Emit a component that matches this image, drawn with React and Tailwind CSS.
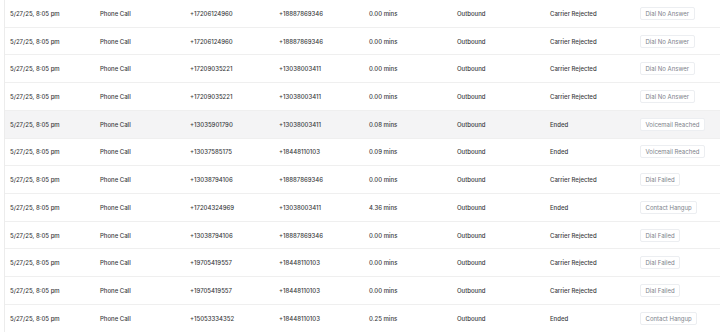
const rows = [
  { from: "+17206124960", to: "+18887869346", dur: "0.00 mins", status: "Carrier Rejected", result: "Dial No Answer" },
  { from: "+17206124960", to: "+18887869346", dur: "0.00 mins", status: "Carrier Rejected", result: "Dial No Answer" },
  { from: "+17209035221", to: "+13038003411", dur: "0.00 mins", status: "Carrier Rejected", result: "Dial No Answer" },
  { from: "+17209035221", to: "+13038003411", dur: "0.00 mins", status: "Carrier Rejected", result: "Dial No Answer" },
  { from: "+13035901790", to: "+13038003411", dur: "0.08 mins", status: "Ended", result: "Voicemail Reached", active: true },
  { from: "+13037585175", to: "+18448110103", dur: "0.09 mins", status: "Ended", result: "Voicemail Reached" },
  { from: "+13038794106", to: "+18887869346", dur: "0.00 mins", status: "Carrier Rejected", result: "Dial Failed" },
  { from: "+17204324969", to: "+13038003411", dur: "4.36 mins", status: "Ended", result: "Contact Hangup" },
  { from: "+13038794106", to: "+18887869346", dur: "0.00 mins", status: "Carrier Rejected", result: "Dial Failed" },
  { from: "+19705419557", to: "+18448110103", dur: "0.00 mins", status: "Carrier Rejected", result: "Dial Failed" },
  { from: "+19705419557", to: "+18448110103", dur: "0.00 mins", status: "Carrier Rejected", result: "Dial Failed" },
  { from: "+15053334352", to: "+18448110103", dur: "0.25 mins", status: "Ended", result: "Contact Hangup" },
];

export default function App() {
  return (
    <div className="w-[720px] h-[332px] overflow-hidden bg-white pl-[4px]" style={{ fontFamily: "Inter, 'Noto Sans', sans-serif" }}>
      <div className="border-l border-[#ececec] h-full">
        {rows.map((r, i) => (
          <div
            key={i}
            className={`grid grid-cols-[90px_90px_89px_90px_88px_93px_90px_1fr] items-center h-[27.73px] pl-[5px] border-b border-[#efefef] text-[6px] font-medium text-[#3a3b40] ${r.active ? "bg-[#f4f4f5]" : ""}`}
          >
            <div>5/27/25, 8:05 pm</div>
            <div>Phone Call</div>
            <div>{r.from}</div>
            <div>{r.to}</div>
            <div>{r.dur}</div>
            <div>Outbound</div>
            <div>{r.status}</div>
            <div>
              <span className="inline-flex items-center h-[13px] px-[4.5px] rounded-[2px] border border-[#eceef1] bg-white text-[6px] font-normal text-[#7d828b]">
                {r.result}
              </span>
            </div>
          </div>
        ))}
      </div>
    </div>
  );
}
